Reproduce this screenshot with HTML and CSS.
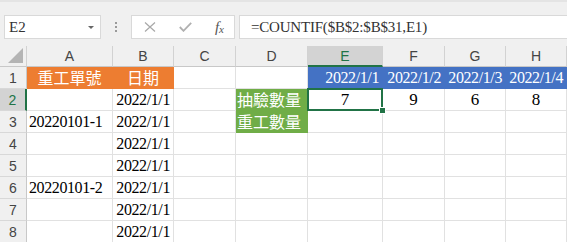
FILE: index.html
```html
<!DOCTYPE html>
<html lang="zh-Hant">
<head>
    <meta charset="UTF-8">
    <title>Sheet</title>
    <link rel="stylesheet" href="styles.css">
</head>
<body>

<div class="toolbar">
    <div class="namebox">E2<span class="drop"></span></div>
    <div class="grip"><i></i><i></i><i></i></div>
    <div class="fxbox">
        <svg width="12" height="10" viewBox="0 0 12 10"><path d="M1 0.5 L11 9.5 M11 0.5 L1 9.5" stroke="#a8a8a8" stroke-width="1.2" fill="none"/></svg>
        <svg width="13" height="10" viewBox="0 0 13 10"><path d="M0.8 5 L4.5 8.8 L12.2 0.8" stroke="#b0b0b0" stroke-width="1.8" fill="none"/></svg>
        <span class="fx">f<sub>x</sub></span>
    </div>
    <div class="formula">=COUNTIF($B$2:$B$31,E1)</div>
</div>

<div class="sheet">
    <div class="hd corner"><span class="tri"></span></div>
    <div class="hd">A</div>
    <div class="hd">B</div>
    <div class="hd">C</div>
    <div class="hd">D</div>
    <div class="hd sel">E</div>
    <div class="hd">F</div>
    <div class="hd">G</div>
    <div class="hd">H</div>

    <div class="rh">1</div>
    <div class="c orange cjk mid">重工單號</div>
    <div class="c orange cjk mid">日期</div>
    <div class="c"></div>
    <div class="c"></div>
    <div class="c blue num">2022/1/1</div>
    <div class="c blue num">2022/1/2</div>
    <div class="c blue num">2022/1/3</div>
    <div class="c blue num">2022/1/4</div>

    <div class="rh sel">2</div>
    <div class="c"></div>
    <div class="c num">2022/1/1</div>
    <div class="c"></div>
    <div class="c green cjk">抽驗數量</div>
    <div class="c active val">7</div>
    <div class="c val">9</div>
    <div class="c val">6</div>
    <div class="c val">8</div>

    <div class="rh">3</div>
    <div class="c txt">20220101-1</div>
    <div class="c num">2022/1/1</div>
    <div class="c"></div>
    <div class="c green cjk">重工數量</div>
    <div class="c"></div>
    <div class="c"></div>
    <div class="c"></div>
    <div class="c"></div>

    <div class="rh">4</div>
    <div class="c"></div>
    <div class="c num">2022/1/1</div>
    <div class="c"></div>
    <div class="c"></div>
    <div class="c"></div>
    <div class="c"></div>
    <div class="c"></div>
    <div class="c"></div>

    <div class="rh">5</div>
    <div class="c"></div>
    <div class="c num">2022/1/1</div>
    <div class="c"></div>
    <div class="c"></div>
    <div class="c"></div>
    <div class="c"></div>
    <div class="c"></div>
    <div class="c"></div>

    <div class="rh">6</div>
    <div class="c txt">20220101-2</div>
    <div class="c num">2022/1/1</div>
    <div class="c"></div>
    <div class="c"></div>
    <div class="c"></div>
    <div class="c"></div>
    <div class="c"></div>
    <div class="c"></div>

    <div class="rh">7</div>
    <div class="c"></div>
    <div class="c num">2022/1/1</div>
    <div class="c"></div>
    <div class="c"></div>
    <div class="c"></div>
    <div class="c"></div>
    <div class="c"></div>
    <div class="c"></div>

    <div class="rh">8</div>
    <div class="c"></div>
    <div class="c num">2022/1/1</div>
    <div class="c"></div>
    <div class="c"></div>
    <div class="c"></div>
    <div class="c"></div>
    <div class="c"></div>
    <div class="c"></div>
</div>

</body>
</html>
```

FILE: styles.css
```css
body {
    margin: 0;
    width: 567px;
    height: 242px;
    overflow: hidden;
    background-color: #fff;
    font-family: "Liberation Serif", "Noto Sans CJK TC", serif;
}

/* formula bar */
.toolbar {
    display: flex;
    height: 46px;
    padding: 13px 0 0 4px;
    box-sizing: border-box;
    background-color: #f0f0f0;
    border-top: 2px solid #e4e4e4;
}
.namebox, .fxbox, .formula {
    height: 24px;
    box-sizing: border-box;
    background-color: #fff;
    border: 1px solid #d9d9d9;
}
.namebox {
    width: 97px;
    display: flex;
    align-items: center;
    justify-content: space-between;
    padding: 0 6px 0 4px;
    font-size: 15px;
    color: #333;
}
.drop {
    width: 0;
    height: 0;
    border-left: 3px solid transparent;
    border-right: 3px solid transparent;
    border-top: 3px solid #666;
}
.grip {
    width: 30px;
    display: flex;
    flex-direction: column;
    align-items: center;
    justify-content: center;
    gap: 2px;
    height: 24px;
}
.grip i {
    width: 2px;
    height: 2px;
    background-color: #9a9a9a;
}
.fxbox {
    width: 104px;
    display: flex;
    align-items: center;
    padding: 0 10px 0 12px;
    justify-content: space-between;
}
.fx {
    font-family: "Liberation Serif", serif;
    font-style: italic;
    font-size: 15px;
    color: #555;
    line-height: 1;
}
.fx sub {
    font-size: 11px;
    vertical-align: -1px;
}
.formula {
    flex: 1;
    margin-left: 4px;
    border-right: none;
    padding-left: 11px;
    font-size: 15px;
    letter-spacing: -0.2px;
    line-height: 22px;
    color: #333;
}

/* sheet */
.sheet {
    display: grid;
    grid-template-columns: 27px 86px 61px 62px 72px 75px 62px 61px 61px;
    grid-template-rows: 21px repeat(8, 22px);
}
.sheet > div {
    box-sizing: border-box;
    border-right: 1px solid #e1e1e1;
    border-bottom: 1px solid #e1e1e1;
    white-space: nowrap;
    overflow: visible;
}
.sheet > .hd {
    background-color: #f0f0f0;
    border-right-color: #d2d2d2;
    border-bottom-color: #c8c8c8;
    font-family: "Liberation Sans", sans-serif;
    font-size: 14px;
    color: #444;
    text-align: center;
    line-height: 21px;
}
.sheet > .hd.sel {
    background-color: #d3d3d3;
    color: #217346;
    border-bottom: 2px solid #217346;
}
.corner {
    position: relative;
}
.tri {
    position: absolute;
    right: 3px;
    bottom: 3px;
    width: 0;
    height: 0;
    border-left: 15px solid transparent;
    border-bottom: 15px solid #b4b4b4;
}
.sheet > .rh {
    background-color: #f0f0f0;
    border-right-color: #c8c8c8;
    border-bottom-color: #d8d8d8;
    font-family: "Liberation Sans", sans-serif;
    font-size: 14px;
    color: #444;
    text-align: center;
    line-height: 22px;
}
.sheet > .rh.sel {
    background-color: #d3d3d3;
    color: #217346;
    border-right: 2px solid #217346;
}
.c {
    font-size: 16px;
    line-height: 22px;
    color: #000;
}
.num {
    text-align: right;
    padding-right: 3px;
    letter-spacing: -0.4px;
}
.txt {
    padding-left: 2px;
    letter-spacing: -0.4px;
}
.val {
    text-align: center;
    font-size: 17px;
}
.cjk {
    font-family: "Noto Sans CJK TC", sans-serif;
    font-size: 16px;
    line-height: 21px;
    color: #fff;
    padding-left: 1px;
}
.mid {
    text-align: center;
    padding-left: 0;
}
.sheet > .orange {
    background-color: #ed7d31;
    border-color: #ed7d31;
}
.sheet > .blue {
    background-color: #4472c4;
    border-color: #4472c4;
    color: #fff;
}
.sheet > .green {
    background-color: #70ad47;
    border-color: #70ad47;
}
.active {
    position: relative;
}
.active::after {
    content: "";
    position: absolute;
    left: -1px;
    top: -1px;
    right: -1px;
    bottom: -1px;
    border: 2px solid #217346;
}
.active::before {
    content: "";
    position: absolute;
    right: -4px;
    bottom: -4px;
    width: 5px;
    height: 5px;
    background-color: #217346;
    border: 1px solid #fff;
    z-index: 1;
}
```
